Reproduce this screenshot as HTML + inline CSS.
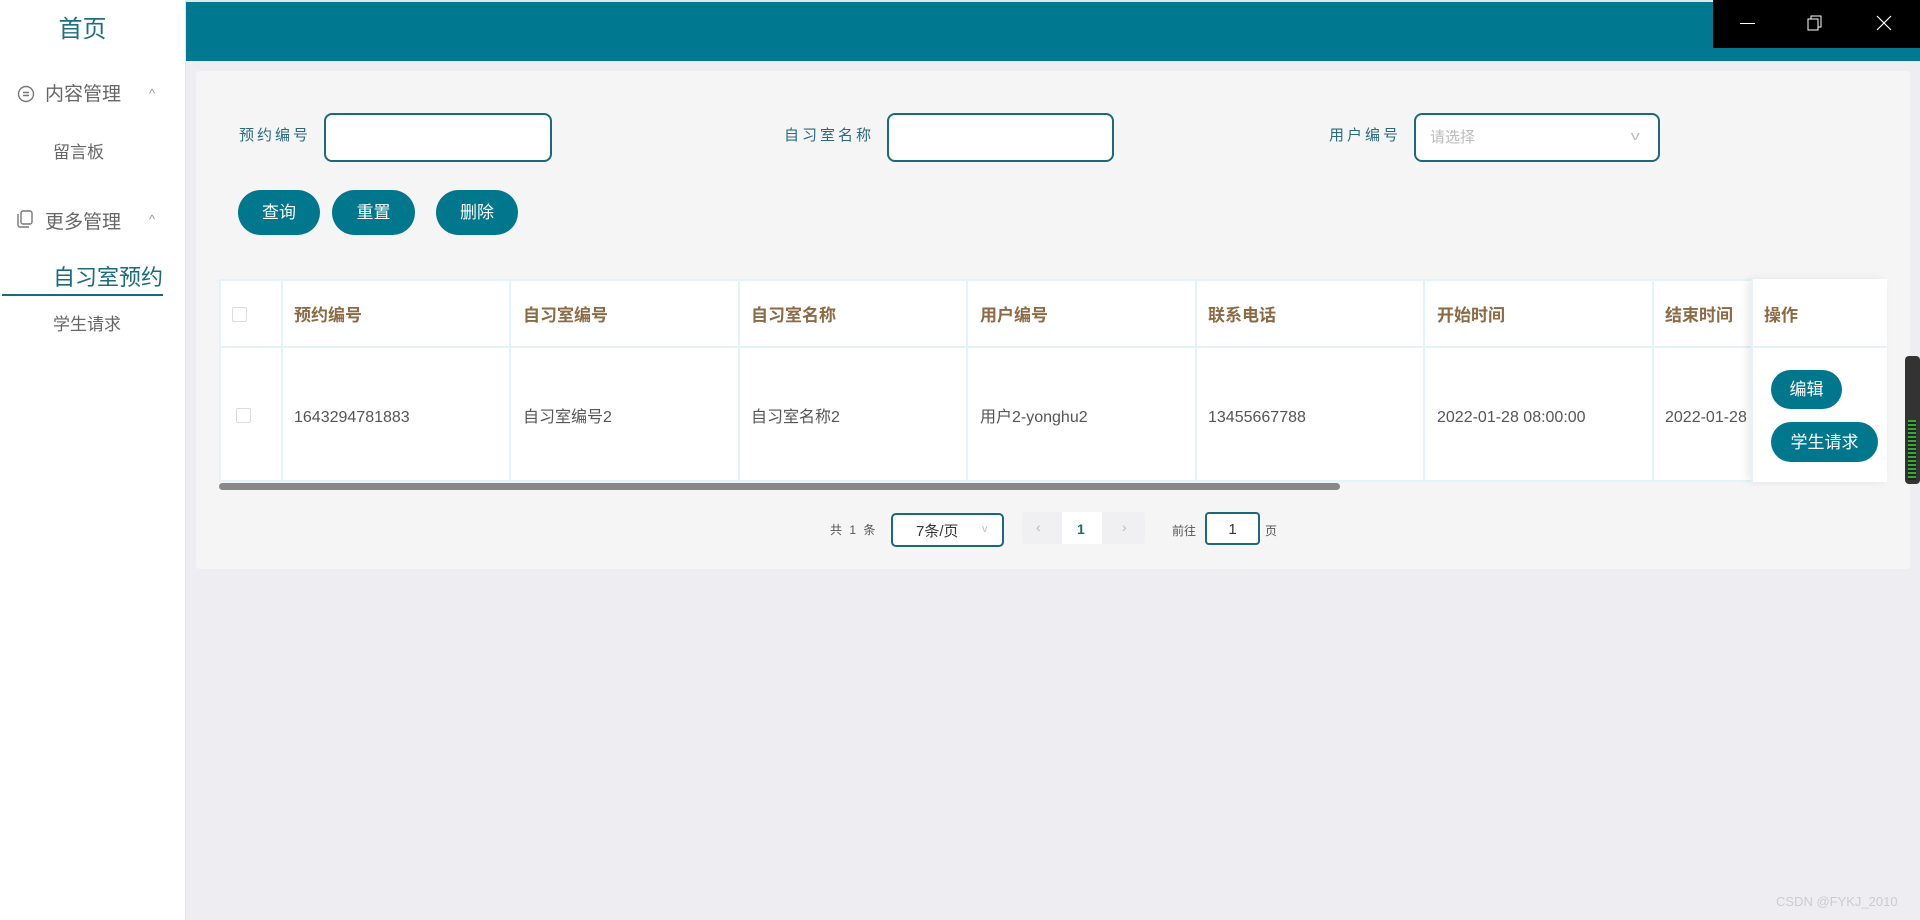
<!DOCTYPE html>
<html><head><meta charset="utf-8"><style>
*{margin:0;padding:0;box-sizing:border-box}
body{width:1920px;height:920px;overflow:hidden;background:#eeeef2;font-family:"Liberation Sans","Noto Sans CJK SC",sans-serif;position:relative}
.abs{position:absolute;line-height:1.2}
#side{left:0;top:0;width:186px;height:920px;background:#fff;border-right:1px solid #e6e6e6}
#hdr{left:186px;top:0;width:1734px;height:61px;background:#00788f;border-top:2px solid #dfe9ec}
.lbl{font-size:15px;color:#2a6a7a;letter-spacing:3px}
.inp{border:2px solid #1a6a7c;border-radius:8px;background:#fff;height:49px}
.btn{background:#00778c;color:#fff;border-radius:23px;font-size:17px;display:flex;align-items:center;justify-content:center}
.th{color:#8b6a44;font-weight:bold;font-size:17px;height:24px;line-height:24px}
.td{color:#555;font-size:16px;height:24px;line-height:24px;top:406px}
.vl{width:2px;background:#e3f3f8}
</style></head><body>
<div id="side" class="abs">
 <div class="abs" style="left:0;width:165px;top:16px;text-align:center;font-size:24px;color:#1f6f80">首页</div>
 <svg class="abs" style="left:17px;top:85px" width="18" height="18" viewBox="0 0 18 18"><circle cx="9" cy="9" r="7.5" fill="none" stroke="#777" stroke-width="1.4"/><path d="M6 7.5h6M6 10.5h6" stroke="#777" stroke-width="1.4"/></svg>
 <div class="abs" style="left:45px;top:84px;font-size:19px;color:#666">内容管理</div>
 <div class="abs" style="left:149px;top:86px;font-size:13px;color:#999">^</div>
 <div class="abs" style="left:53px;top:143px;font-size:17px;color:#666">留言板</div>
 <svg class="abs" style="left:16px;top:209px" width="18" height="20" viewBox="0 0 18 20"><rect x="5" y="2" width="11" height="13" rx="2" fill="none" stroke="#777" stroke-width="1.4"/><path d="M2 5v11a2 2 0 0 0 2 2h9" fill="none" stroke="#777" stroke-width="1.4"/></svg>
 <div class="abs" style="left:45px;top:212px;font-size:19px;color:#666">更多管理</div>
 <div class="abs" style="left:149px;top:212px;font-size:13px;color:#999">^</div>
 <div class="abs" style="left:53px;top:265px;font-size:22px;color:#1a6a7c">自习室预约</div>
 <div class="abs" style="left:2px;top:294px;width:161px;height:2px;background:#1a6a7c"></div>
 <div class="abs" style="left:53px;top:315px;font-size:17px;color:#666">学生请求</div>
</div>
<div id="hdr" class="abs"></div>
<div class="abs" style="left:1713px;top:0;width:207px;height:48px;background:#000"></div>
<div class="abs" style="left:1740px;top:23px;width:15px;height:1px;background:#fff"></div>
<svg class="abs" style="left:1807px;top:15px" width="16" height="16"><rect x="1" y="4" width="10" height="11" fill="none" stroke="#fff"/><path d="M4 4V1h10v11h-3" fill="none" stroke="#fff"/></svg>
<svg class="abs" style="left:1876px;top:15px" width="16" height="16"><path d="M1 1l14 14M15 1L1 15" stroke="#fff" stroke-width="1.2"/></svg>

<div class="abs" style="left:196px;top:71px;width:1714px;height:498px;background:#f5f5f6;border-radius:4px"></div>
<div class="abs lbl" style="left:239px;top:127px">预约编号</div>
<div class="abs inp" style="left:324px;top:113px;width:228px"></div>
<div class="abs lbl" style="left:784px;top:127px">自习室名称</div>
<div class="abs inp" style="left:887px;top:113px;width:227px"></div>
<div class="abs lbl" style="left:1329px;top:127px">用户编号</div>
<div class="abs inp" style="left:1414px;top:113px;width:246px"></div>
<div class="abs" style="left:1430px;top:129px;font-size:15px;color:#bbb">请选择</div>
<div class="abs" style="left:1632px;top:128px;font-size:13px;color:#bbb;transform:scaleX(1.4)">v</div>

<div class="abs btn" style="left:238px;top:190px;width:82px;height:45px;padding-top:2px">查询</div>
<div class="abs btn" style="left:332px;top:190px;width:83px;height:45px;padding-top:2px">重置</div>
<div class="abs btn" style="left:436px;top:190px;width:82px;height:45px;padding-top:2px">删除</div>

<div class="abs" style="left:219px;top:279px;width:1668px;height:203px;background:#fff;border:2px solid #e3f3f8"></div>
<div class="abs" style="left:219px;top:346px;width:1668px;height:2px;background:#e3f3f8"></div>
<div class="abs vl" style="left:281px;top:279px;height:203px"></div>
<div class="abs vl" style="left:509px;top:279px;height:203px"></div>
<div class="abs vl" style="left:738px;top:279px;height:203px"></div>
<div class="abs vl" style="left:966px;top:279px;height:203px"></div>
<div class="abs vl" style="left:1195px;top:279px;height:203px"></div>
<div class="abs vl" style="left:1423px;top:279px;height:203px"></div>
<div class="abs vl" style="left:1652px;top:279px;height:203px"></div>
<div class="abs" style="left:1751px;top:279px;width:136px;height:203px;background:#fff;box-shadow:-4px 0 8px rgba(0,0,0,0.08);border-left:2px solid #e3f3f8"></div>
<div class="abs" style="left:1751px;top:346px;width:136px;height:2px;background:#e3f3f8"></div>
<div class="abs" style="left:232px;top:307px;width:15px;height:15px;border:1px solid #ddd;border-radius:2px;background:#fff"></div>
<div class="abs" style="left:236px;top:408px;width:15px;height:15px;border:1px solid #ddd;border-radius:2px;background:#fff"></div>
<div class="abs th" style="left:294px;top:304px">预约编号</div>
<div class="abs th" style="left:523px;top:304px">自习室编号</div>
<div class="abs th" style="left:751px;top:304px">自习室名称</div>
<div class="abs th" style="left:980px;top:304px">用户编号</div>
<div class="abs th" style="left:1208px;top:304px">联系电话</div>
<div class="abs th" style="left:1437px;top:304px">开始时间</div>
<div class="abs th" style="left:1665px;top:304px">结束时间</div>
<div class="abs th" style="left:1764px;top:304px">操作</div>
<div class="abs td" style="left:294px">1643294781883</div>
<div class="abs td" style="left:523px">自习室编号2</div>
<div class="abs td" style="left:751px">自习室名称2</div>
<div class="abs td" style="left:980px">用户2-yonghu2</div>
<div class="abs td" style="left:1208px">13455667788</div>
<div class="abs td" style="left:1437px">2022-01-28 08:00:00</div>
<div class="abs td" style="left:1665px;width:85px;overflow:hidden;white-space:nowrap">2022-01-28</div>
<div class="abs btn" style="left:1771px;top:370px;width:71px;height:39px;padding-top:2px">编辑</div>
<div class="abs btn" style="left:1771px;top:422px;width:107px;height:40px;padding-top:2px">学生请求</div>
<div class="abs" style="left:219px;top:483px;width:1121px;height:7px;background:#888;border-radius:4px"></div>

<div class="abs" style="left:830px;top:523px;font-size:12px;color:#555;letter-spacing:2px">共 1 条</div>
<div class="abs" style="left:891px;top:513px;width:113px;height:34px;border:2px solid #1a6a7c;border-radius:5px;background:#fff"></div>
<div class="abs" style="left:916px;top:523px;font-size:15px;color:#333">7条/页</div>
<div class="abs" style="left:982px;top:523px;font-size:11px;color:#bbb">v</div>
<div class="abs" style="left:1022px;top:512px;width:123px;height:32px;background:#f0f0f2;border-radius:3px"></div>
<div class="abs" style="left:1062px;top:512px;width:40px;height:32px;background:#fff"></div>
<div class="abs" style="left:1036px;top:519px;font-size:14px;color:#bbb">‹</div>
<div class="abs" style="left:1077px;top:521px;font-size:14px;color:#1a6a7c;font-weight:bold">1</div>
<div class="abs" style="left:1122px;top:519px;font-size:14px;color:#bbb">›</div>
<div class="abs" style="left:1172px;top:524px;font-size:12px;color:#555">前往</div>
<div class="abs" style="left:1205px;top:512px;width:55px;height:33px;border:2px solid #1a6a7c;border-radius:4px;background:#fff;text-align:center;font-size:15px;line-height:31px;color:#333">1</div>
<div class="abs" style="left:1265px;top:524px;font-size:12px;color:#555">页</div>

<div class="abs" style="left:1905px;top:356px;width:15px;height:128px;background:#333;border-radius:4px"></div>
<div class="abs" style="left:1908px;top:420px;width:8px;height:60px;background:repeating-linear-gradient(#3a3 0 2px,#222 2px 4px)"></div>
<div class="abs" style="left:1776px;top:894px;font-size:13px;color:#ccc">CSDN @FYKJ_2010</div>
</body></html>
